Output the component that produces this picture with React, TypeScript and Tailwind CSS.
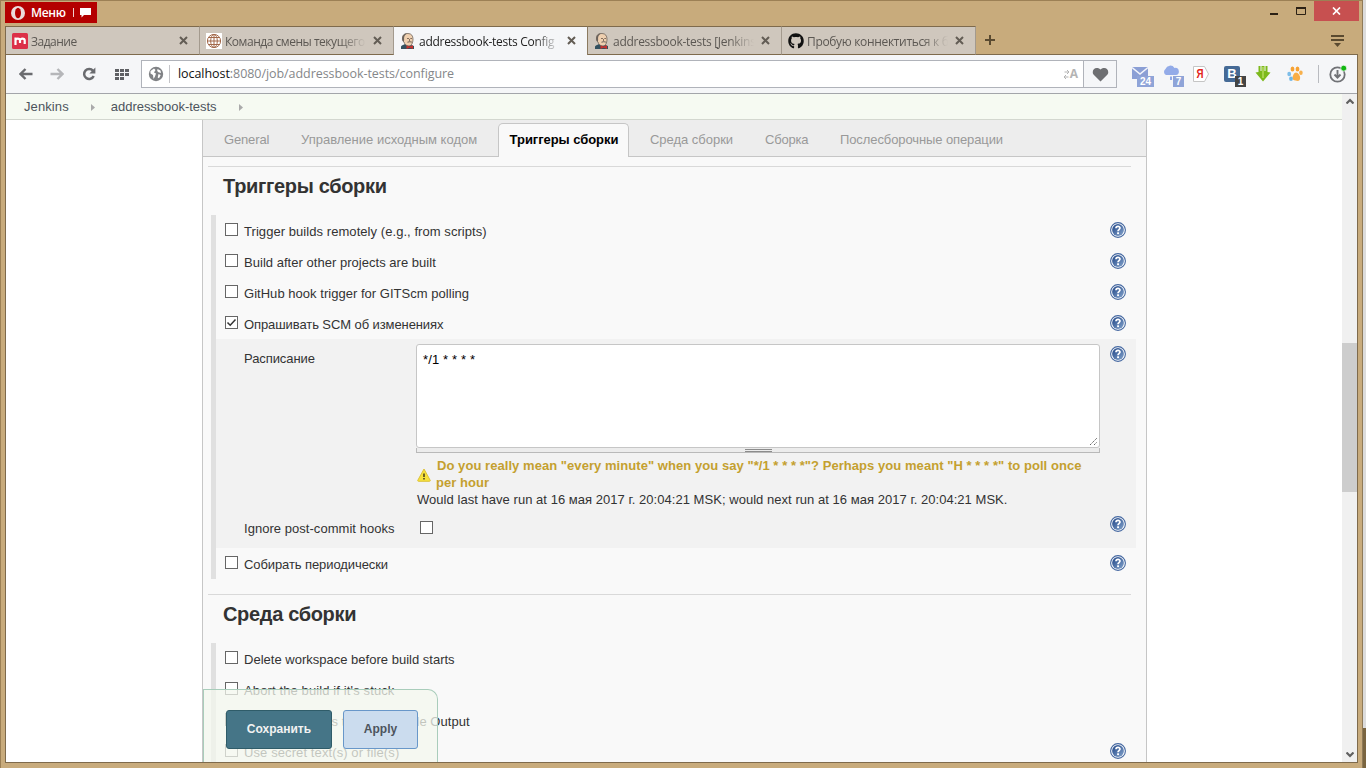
import React from "react";
import { FaGithub } from "react-icons/fa";

const UI = "font-['Open_Sans','Noto_Sans',sans-serif]";

function JenkinsIcon() {
  return (
    <svg width="16" height="16" viewBox="0 0 16 16" className="shrink-0">
      <path d="M1 16V13.500C2 12 4 11.500 5 11L11 12L14 13V16Z" fill="#33515f" />
      <path d="M2.500 5C2.500 1.500 5 .5 8 .5C11.500 .5 13 3 13 6C13 10 11.500 13 9 13C6 13 4.500 11 4 9C2.800 8.500 2.200 7 2.500 5Z" fill="#efd0b0" stroke="#5f544c" strokeWidth=".7" />
      <path d="M2.300 7C1.800 3 4 .5 7 .6C4.600 2 3.800 4 4.100 7L3.800 9Z" fill="#6a625c" />
      <path d="M7 5.500H9M10.300 5.500H12M9.500 6V8" stroke="#6a5647" strokeWidth=".8" />
      <path d="M7.500 9.500C9 8.300 10.500 8.500 12 9.300" stroke="#8a7a6e" strokeWidth="1.200" fill="none" />
      <path d="M6.500 12.500L9.500 13.500L13 12.200V16L9.500 14.800L6.500 16Z" fill="#c5322f" />
    </svg>
  );
}

function GlobeIcon() {
  return (
    <svg width="16" height="16" viewBox="0 0 16 16" className="shrink-0 bg-white" fill="none" stroke="#a3694a" strokeWidth="1">
      <circle cx="8" cy="8" r="6.600" />
      <ellipse cx="8" cy="8" rx="3.300" ry="6.600" />
      <path d="M8 1.400V14.600M1.400 8H14.600M2.500 4.500H13.500M2.500 11.500H13.500" />
    </svg>
  );
}

function MIcon() {
  return (
    <svg width="16" height="16" viewBox="0 0 16 16" className="shrink-0">
      <rect width="16" height="16" rx="1.500" fill="#dc3048" />
      <path d="M3.500 12V4.500M3.500 7.500C3.500 5 8 5 8 7.500V10M8 7.500C8 5 12.700 5 12.700 7.500V11" stroke="#fff" strokeWidth="2.200" fill="none" />
    </svg>
  );
}

function CloseX() {
  return (
    <svg width="9" height="9" viewBox="0 0 9 9" className="shrink-0">
      <path d="M1 1L8 8M8 1L1 8" stroke="#635d55" strokeWidth="2" />
    </svg>
  );
}

function BrowserTab({ icon, title, active, track }: { icon: React.ReactNode; title: string; active?: boolean; track: string }) {
  return (
    <div className={`flex h-[29px] w-[194px] shrink-0 items-center border-t border-r border-t-[#7e6a4c] pl-[6px] pr-[11px] ${active ? "border-r-[#8b7a60] bg-[#f5f6f8] pb-[1px]" : "border-b border-r-[#a39a8e] border-b-[#7e6a4c] bg-[#cfc7bd]"}`}>
      {icon}
      <div className={`mt-[2px] ml-[3px] h-[20px] w-[141px] shrink-0 overflow-hidden text-[12px] leading-[20px] whitespace-nowrap [mask-image:linear-gradient(to_right,#000_82%,transparent)] ${track} ${active ? "text-[#222]" : "text-[#5c5853]"}`}>{title}</div>
      <div className="ml-auto"><CloseX /></div>
    </div>
  );
}

function Help() {
  return (
    <svg width="16" height="16" viewBox="0 0 16 16" className="shrink-0">
      <defs>
        <linearGradient id="hg" x1="0" y1="0" x2="1" y2="1">
          <stop offset="0" stopColor="#1f4586" />
          <stop offset="1" stopColor="#86a5cd" />
        </linearGradient>
      </defs>
      <circle cx="8" cy="8" r="7.400" fill="#fff" stroke="#4467a0" strokeWidth="1.100" />
      <circle cx="8" cy="8" r="5.900" fill="url(#hg)" />
      <path d="M6 6.200C6 3.900 10 3.900 10 6.100C10 7.600 8 7.600 8 9.200" stroke="#fff" strokeWidth="1.700" fill="none" />
      <rect x="7.100" y="10.300" width="1.900" height="1.800" fill="#fff" />
    </svg>
  );
}

function Check({ on }: { on?: boolean }) {
  return (
    <span className="flex h-[13px] w-[13px] shrink-0 items-center justify-center border border-[#666] bg-white">
      {on && (
        <svg width="11" height="11" viewBox="0 0 11 11">
          <path d="M1.500 5.500L4.200 8.200L9.500 2.500" fill="none" stroke="#333" strokeWidth="1.500" />
        </svg>
      )}
    </span>
  );
}

function Row({ label, on, help, track }: { label: string; on?: boolean; help?: boolean; track: string }) {
  return (
    <div className="flex h-[31px] items-start pt-[8px] pr-[10px] pl-[9px]">
      <Check on={on} />
      <span className={`ml-[6px] leading-[17px] whitespace-nowrap ${track}`}>{label}</span>
      {help && <span className="-mt-[1px] ml-auto"><Help /></span>}
    </div>
  );
}

function Heading({ children }: { children: React.ReactNode }) {
  return (
    <div className="ml-[5px] h-[49px] w-[923px] border-t border-[#d9d9d9] pt-[6px] pl-[15px] text-[20px] leading-[26px] font-bold tracking-[-0.33px] text-[#333]">
      {children}
    </div>
  );
}

function Badge({ children, className }: { children: React.ReactNode; className: string }) {
  return (
    <span className={`absolute flex h-[11px] items-center justify-center text-[10px] leading-[11px] font-bold text-white font-['Liberation_Sans',sans-serif] ${className}`}>{children}</span>
  );
}

function Toolbar() {
  return (
    <div className="flex h-[39px] items-center border-b border-[#a3a5aa] bg-[#f5f6f8]">
      <svg width="14" height="12" viewBox="0 0 14 12" className="ml-[13px]"><path d="M13.500 6H2M6.500 1L1.500 6L6.500 11" fill="none" stroke="#6a6b6f" strokeWidth="2.400" /></svg>
      <svg width="14" height="12" viewBox="0 0 14 12" className="ml-[17px]"><path d="M.5 6H12M7.500 1L12.500 6L7.500 11" fill="none" stroke="#b5b6b9" strokeWidth="2.400" /></svg>
      <svg width="14" height="14" viewBox="0 0 14 14" className="ml-[18px]"><path d="M11 3.800A5 5 0 1 0 11.700 9" fill="none" stroke="#6a6b6f" strokeWidth="2.500" /><path d="M13.400 .5V6.500H7.400Z" fill="#6a6b6f" /></svg>
      <svg width="14" height="11" viewBox="0 0 14 11" className="ml-[19px]" fill="#5f6064">
        <path d="M0 0H4V3H0ZM5 0H9V3H5ZM10 0H14V3H10ZM0 4H4V7H0ZM5 4H9V7H5ZM10 4H14V7H10ZM0 8H4V11H0ZM5 8H9V11H5Z" />
      </svg>
      <div className="ml-[12px] flex h-[28px] w-[976px] items-center border border-[#b0b3ba] bg-white">
        <svg width="16" height="16" viewBox="0 0 16 16" className="ml-[6px]">
          <circle cx="8" cy="8" r="7.200" fill="#808285" />
          <path d="M2.500 5L6 2.500L7.500 4L6 6.500L8 7.500L7 10.500L5.500 13L5 9L2.500 7.500ZM9.500 3L12.500 4.500L13 7L10.500 6.200L9.200 5ZM10.500 8L12.700 9L11 12.300L9.700 11.500Z" fill="#fff" />
        </svg>
        <div className="ml-[5px] h-[18px] w-px bg-[#c4c4c8]" />
        <div className="ml-[8px] text-[12.500px] leading-[20px] tracking-[-0.06px] text-[#85878a]"><span className="text-[#111]">localhost</span>:8080/job/addressbook-tests/configure</div>
        <div className="ml-auto flex items-center pr-[5px]">
          <svg width="7" height="9" viewBox="0 0 7 9" fill="none" stroke="#b4b4b4"><path d="M1.500 2H6M4 0L6 2L4 4M5.500 7H1M3 5L1 7L3 9" /></svg>
          <span className="text-[12px] leading-[14px] font-bold text-[#b4b4b4]">A</span>
        </div>
        <div className="flex h-full w-[33px] items-center justify-center border-l border-[#b0b3ba] bg-[#f5f6f8]">
          <svg width="17" height="15" viewBox="0 0 17 15"><path d="M8.500 14.500L1.500 7.500C-1 4 3-1.500 8.500 2.500C14-1.500 18 4 15.500 7.500Z" fill="#6e6f72" /></svg>
        </div>
      </div>
      <div className="relative ml-[14px] h-[22px] w-[23px]">
        <svg width="18" height="22" viewBox="0 0 18 22"><rect x="1" y="4" width="16" height="12" fill="#8b9fd5" /><path d="M1 4.500L9 11L17 4.500" fill="none" stroke="#f3f5fb" strokeWidth="1.600" /></svg>
        <Badge className="top-[13px] left-[6px] w-[17px] bg-[#8fa4d8]">24</Badge>
      </div>
      <div className="relative ml-[8px] h-[22px] w-[23px]">
        <svg width="18" height="22" viewBox="0 0 18 22"><path d="M4 12A3.500 3.500 0 0 1 3.500 6A5 5 0 0 1 12.500 5A3.500 3.500 0 0 1 14 12Z" fill="#93abe8" /><path d="M9 13.500V17" stroke="#6f8fe0" strokeWidth="1.500" /></svg>
        <Badge className="top-[13px] left-[11px] w-[11px] bg-[#8fa4d8]">7</Badge>
      </div>
      <div className="ml-[8px] h-[16px] w-[16px]">
        <svg width="16" height="16" viewBox="0 0 16 16"><path d="M.5 .5H11.500L15.500 8L11.500 15.500H.5Z" fill="#fff" stroke="#c5c5c5" /><text x="7" y="12.300" textAnchor="middle" fontSize="12" fontWeight="700" fill="#e2231a" fontFamily="Liberation Sans" textLength="7" lengthAdjust="spacingAndGlyphs">Я</text></svg>
      </div>
      <div className="relative ml-[15px] h-[22px] w-[22px]">
        <div className="mt-[3px] flex h-[16px] w-[16px] items-center justify-center rounded-[2px] bg-[#456a96] font-['Liberation_Sans',sans-serif] text-[13px] leading-[16px] font-bold text-white">B</div>
        <Badge className="top-[13px] left-[11px] w-[11px] bg-[#444]">1</Badge>
      </div>
      <svg width="16" height="16" viewBox="0 0 16 16" className="ml-[9px]"><path d="M3.500 0H5.500V5H6.500V0H9.500V5H10.500V0H12.500V6L15.500 6.500L8 15.500L.5 6.500L3.500 6Z" fill="#7db91d" /><path d="M8 1V12" stroke="#b5dc5c" strokeWidth="1.500" /></svg>
      <svg width="16" height="16" viewBox="0 0 16 16" className="ml-[16px]">
        <ellipse cx="5.500" cy="3" rx="1.900" ry="2.600" fill="#f7a233" /><ellipse cx="10.500" cy="3" rx="1.900" ry="2.600" fill="#f7a233" />
        <ellipse cx="2.200" cy="8" rx="1.900" ry="2.300" fill="#7dbde8" /><ellipse cx="13.900" cy="6.800" rx="1.800" ry="2.300" fill="#f7b04c" />
        <path d="M9 6.500C11 6.500 14 10 13 13C12 16 10 14.500 8.500 14.500C6.500 14.500 5.500 13.500 5.500 12C5.500 10 7 6.500 9 6.500Z" fill="#f9ad45" />
        <ellipse cx="4" cy="12.800" rx="1.900" ry="2.200" fill="#6fb7e8" />
      </svg>
      <div className="ml-[15px] h-[18px] w-px bg-[#b9bbc0]" />
      <svg width="18" height="18" viewBox="0 0 18 18" className="ml-[10px]">
        <circle cx="8.500" cy="9.500" r="7.200" fill="none" stroke="#707276" strokeWidth="1.800" />
        <path d="M8.500 5V12M5.500 9.500L8.500 12.700L11.500 9.500" fill="none" stroke="#707276" strokeWidth="1.900" />
        <circle cx="14.700" cy="3.200" r="3" fill="#12b712" stroke="#f5f6f8" strokeWidth=".8" />
      </svg>
    </div>
  );
}

function ConfigTabs() {
  const base = "flex h-[36px] items-center pt-[3px] whitespace-nowrap";
  return (
    <div className="flex h-[37px] items-start border-b border-[#c6c6c6] bg-[#ededed] text-[#999]">
      <div className={`${base} ml-[21px] w-[77px] tracking-[-0.15px]`}>General</div>
      <div className={`${base} w-[197px]`}>Управление исходным кодом</div>
      <div className="mt-[3px] flex h-[34px] w-[131px] items-center justify-center rounded-t-[5px] border border-b-0 border-[#c6c6c6] bg-[#f9f9f9] pb-[2px] pl-[1px] font-bold tracking-[-0.05px] whitespace-nowrap text-black">Триггеры сборки</div>
      <div className={`${base} ml-[21px] w-[115px] tracking-[-0.02px]`}>Среда сборки</div>
      <div className={`${base} w-[75px] tracking-[-0.2px]`}>Сборка</div>
      <div className={`${base} tracking-[-0.1px]`}>Послесборочные операции</div>
    </div>
  );
}

function Schedule() {
  return (
    <div className="flex h-[209px] bg-[#f2f2f2] pr-[10px] pl-[28px]">
      <div className="flex w-[172px] flex-col">
        <span className="mt-[11px] leading-[17px] tracking-[-0.08px]">Расписание</span>
        <span className="mt-[153px] leading-[17px] tracking-[0.04px] whitespace-nowrap">Ignore post-commit hooks</span>
      </div>
      <div className="w-[684px]">
        <div className="mt-[5px] flex h-[104px] items-end justify-end rounded-[3px] border border-[#c6c6c6] bg-white">
          <span className="mt-[6px] mr-auto ml-[6px] self-start leading-[17px] tracking-[0.15px] text-black">*/1 * * * *</span>
          <svg width="9" height="9" viewBox="0 0 9 9" className="mr-[1px] mb-[1px]" stroke="#666" fill="none"><path d="M1 8L8 1M5 8L8 5" strokeDasharray="1.500 .7" /></svg>
        </div>
        <div className="flex h-[5px] justify-center border border-t-0 border-[#b9b9b9] bg-[#ececec]">
          <div className="mt-[1px] h-[3px] w-[27px] border-y border-[#8c8c8c]" />
        </div>
        <div className="mt-[4px] flex">
          <svg width="14" height="14" viewBox="0 0 14 14" className="mt-[11px] ml-[1px] shrink-0">
            <path d="M7 1L13.300 12.500Q13.300 13.300 12.500 13.300H1.500Q.7 13.300 .7 12.500Z" fill="#f7e23c" stroke="#dcc23a" />
            <path d="M7 5.500V9M7 10V11.500" stroke="#4d4420" strokeWidth="1.600" />
          </svg>
          <div className="ml-[5px] leading-[17px] font-bold tracking-[0.055px] whitespace-nowrap text-[#c4a02f]"><span className="ml-[1px]">Do you really mean "every minute" when you say "*/1 * * * *"? Perhaps you meant "H * * * *" to poll once</span><br />per hour</div>
        </div>
        <div className="ml-[1px] leading-[17px] tracking-[0.04px] whitespace-nowrap">Would last have run at 16 мая 2017 г. 20:04:21 MSK; would next run at 16 мая 2017 г. 20:04:21 MSK.</div>
        <div className="mt-[13px] ml-[4px]"><Check /></div>
      </div>
      <div className="ml-auto flex flex-col">
        <span className="mt-[7px]"><Help /></span>
        <span className="mt-[154px]"><Help /></span>
      </div>
    </div>
  );
}

export default function App() {
  return (
    <div className="flex h-[768px] w-[1366px] overflow-hidden bg-[#c8ab7c]">
      <div className="flex w-[1363px] flex-col border-t border-r border-l border-t-[#9c8055] border-r-[#8f7a58] border-l-[#9c8055]">
        <div className={`flex h-[25px] items-start pl-[4px] ${UI}`}>
          <div className="mt-[1px] flex h-[21px] w-[92px] items-center bg-[#b40000] text-white">
            <svg width="14" height="14" viewBox="0 0 14 14" className="ml-[6px]"><ellipse cx="7" cy="7" rx="7" ry="7" fill="#ecdcdc" /><ellipse cx="7" cy="7" rx="3" ry="5.300" fill="#b40000" /></svg>
            <span className="ml-[6px] w-[36px] text-[12px] leading-[20px] font-semibold tracking-[-0.3px]">Меню</span>
            <div className="ml-[6px] h-[9px] w-px bg-[#f0d0d0]" />
            <svg width="11" height="10" viewBox="0 0 11 10" className="ml-[6px]"><path d="M0 0H11V7H4L1.500 9.500V7H0Z" fill="#fff" /></svg>
          </div>
          <svg width="11" height="12" viewBox="0 0 11 12" className="mt-[3px] ml-auto"><path d="M1 10H9" stroke="#2b2115" strokeWidth="2" /></svg>
          <svg width="10" height="8" viewBox="0 0 10 8" className="mt-[6px] ml-[16px]"><path d="M.5 1V7.500H9.500V1Z" fill="none" stroke="#2b2115" /><path d="M0 1H10" stroke="#2b2115" strokeWidth="2" /></svg>
          <div className="mr-[3px] ml-[8px] flex h-[20px] w-[45px] items-center justify-center bg-[#c75050]">
            <svg width="9" height="8" viewBox="0 0 9 8"><path d="M1 .5L8 7.500M8 .5L1 7.500" stroke="#fff" strokeWidth="1.700" /></svg>
          </div>
        </div>
        <div className="mr-[4px] ml-[4px] flex h-[737px] flex-col border-x border-[#7e6a4c]">
          <div className={`-mx-[1px] flex h-[29px] shrink-0 items-start border-b border-[#7e6a4c] bg-[#c8ab7c] ${UI}`}>
            <div className="-mb-[1px] flex border-l border-[#7e6a4c]">
              <BrowserTab icon={<MIcon />} title="Задание" track="tracking-[-0.5px]" />
              <BrowserTab icon={<GlobeIcon />} title="Команда смены текущего" track="tracking-[-0.47px]" />
              <BrowserTab icon={<JenkinsIcon />} title="addressbook-tests Config |" active track="tracking-[-0.28px]" />
              <BrowserTab icon={<JenkinsIcon />} title="addressbook-tests [Jenkins" track="tracking-[-0.28px]" />
              <BrowserTab icon={<FaGithub size={16} className="shrink-0" color="#111" />} title="Пробую коннектиться к б" track="tracking-[-0.33px]" />
            </div>
            <svg width="10" height="10" viewBox="0 0 10 10" className="mt-[9px] ml-[9px]"><path d="M5 0V10M0 5H10" stroke="#5a4a30" strokeWidth="2" /></svg>
            <svg width="13" height="12" viewBox="0 0 13 12" className="mt-[9px] mr-[14px] ml-auto" fill="#5a4a30"><path d="M0 0H13V2H0ZM0 4H13V6H0ZM3 8H10L6.500 12Z" /></svg>
          </div>
          <div className={UI}><Toolbar /></div>
          <div className="flex h-[669px] overflow-hidden border-b border-[#7e6a4c] bg-white font-['Liberation_Sans',Arial,sans-serif] text-[13px] text-[#333]">
            <div className="flex w-[1336px] shrink-0 flex-col">
              <div className="flex h-[26px] shrink-0 items-center border-b border-[#d3d7cf] bg-[#f6faf2] pl-[18px] text-[#4d545d]">
                <span className="tracking-[0.1px]">Jenkins</span>
                <svg width="4" height="7" viewBox="0 0 4 7" className="mt-[1px] ml-[22px]"><path d="M0 0L4 3.500L0 7Z" fill="#aaa" /></svg>
                <span className="ml-[16px] tracking-[-0.03px]">addressbook-tests</span>
                <svg width="4" height="7" viewBox="0 0 4 7" className="mt-[1px] ml-[22px]"><path d="M0 0L4 3.500L0 7Z" fill="#aaa" /></svg>
              </div>
              <div className="relative ml-[196px] h-[642px] w-[945px] overflow-hidden border-x border-[#c6c6c6] bg-[#f9f9f9]">
                <ConfigTabs />
                <div className="h-[9px]" />
                <Heading>Триггеры сборки</Heading>
                <div className="ml-[8px] w-[925px] border-l-[5px] border-[#e0e0e0]">
                  <Row label="Trigger builds remotely (e.g., from scripts)" help track="tracking-[0.06px]" />
                  <Row label="Build after other projects are built" help track="tracking-[0.03px]" />
                  <Row label="GitHub hook trigger for GITScm polling" help track="tracking-[0.03px]" />
                  <Row label="Опрашивать SCM об изменениях" on help track="tracking-[-0.09px]" />
                  <Schedule />
                  <Row label="Собирать периодически" help track="tracking-[-0.09px]" />
                </div>
                <div className="h-[15px]" />
                <Heading>Среда сборки</Heading>
                <div className="ml-[8px] w-[925px] border-l-[5px] border-[#e0e0e0]">
                  <Row label="Delete workspace before build starts" track="tracking-[0.01px]" />
                  <Row label="Abort the build if it's stuck" track="tracking-[0.12px]" />
                  <Row label="Add timestamps to the Console Output" track="tracking-[0.07px]" />
                  <Row label="Use secret text(s) or file(s)" help track="tracking-[0.1px]" />
                </div>
                <div className="absolute top-[569px] left-0 flex h-[90px] w-[235px] rounded-tr-[10px] border-t border-r border-l border-[#a9cdbb] bg-[#f3f7ee]/75 pt-[20px] pl-[22px] text-[12px] font-bold">
                  <div className="flex h-[39px] w-[106px] items-center justify-center rounded-[3px] border border-[#2f5c69] bg-[#457587] pb-[1px] text-[#f2f2f2]">Сохранить</div>
                  <div className="ml-[11px] flex h-[39px] w-[75px] items-center justify-center rounded-[3px] border border-[#6897c9] bg-[#cbdcee] pb-[1px] text-[#4d545d]">Apply</div>
                </div>
              </div>
            </div>
            <div className="flex w-[15px] shrink-0 flex-col items-center bg-[#f0f0f0]">
              <svg width="8" height="6" viewBox="0 0 8 6" className="mt-[4px]"><path d="M.5 5.500L4 2L7.500 5.500" fill="none" stroke="#606060" strokeWidth="2.200" /></svg>
              <div className="mt-[239px] h-[149px] w-full bg-[#cdcdcd]" />
              <svg width="8" height="6" viewBox="0 0 8 6" className="mt-auto mb-[4px]"><path d="M.5 .5L4 4L7.500 .5" fill="none" stroke="#606060" strokeWidth="2.200" /></svg>
            </div>
          </div>
        </div>
      </div>
      <div className="flex w-[3px] flex-col">
        <div className="h-[728px] bg-[#dcdcdc]" />
        <div className="flex-1 bg-[#7a6540]" />
      </div>
    </div>
  );
}
